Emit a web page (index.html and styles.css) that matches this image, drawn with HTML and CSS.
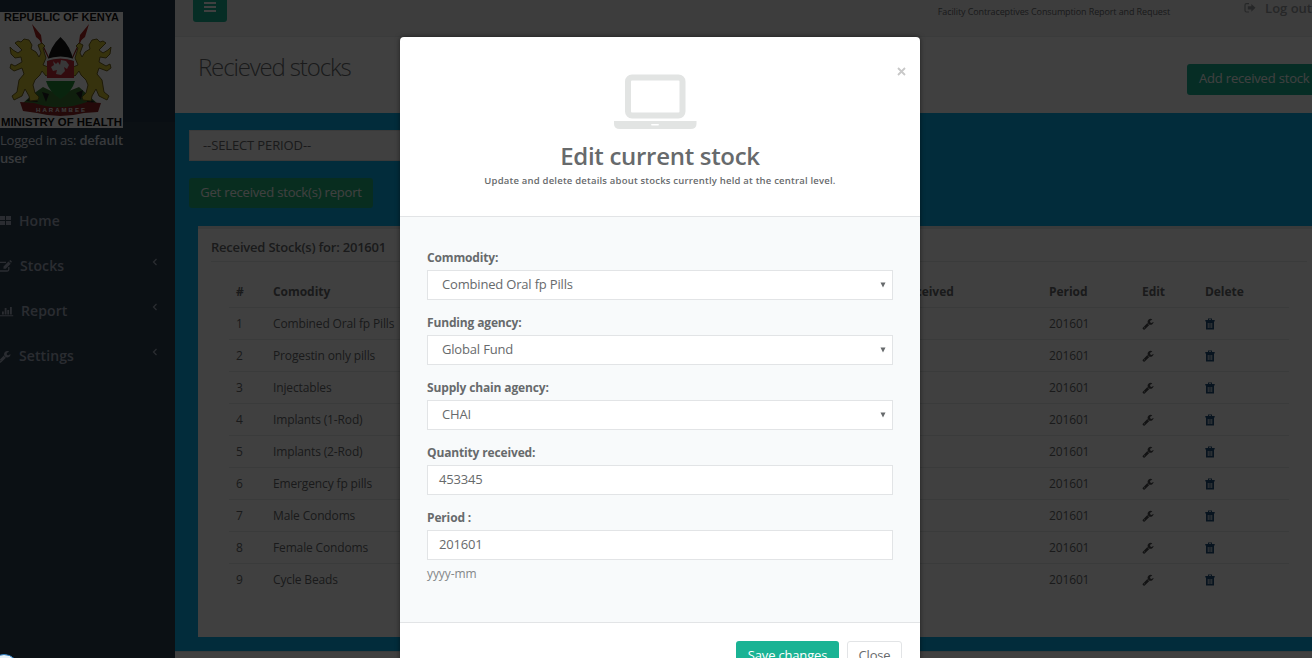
FILE: index.html
```html
<!DOCTYPE html>
<html lang="en">
<head>
<meta charset="utf-8">
<title>Received stocks</title>
<link rel="stylesheet" href="styles.css">
</head>
<body>
<svg class="defs" width="0" height="0">
  <symbol id="wrench" viewBox="0 0 1792 1792"><path d="M448 1472q0-26-19-45t-45-19-45 19-19 45 19 45 45 19 45-19 19-45zm644-420l-682 682q-37 37-90 37-52 0-91-37l-106-108q-38-36-38-90 0-53 38-91l681-681q39 98 114.500 173.500t173.500 114.500zm634-435q0 39-23 106-47 134-164.500 217.500t-258.500 83.500q-185 0-316.500-131.500t-131.500-316.500 131.500-316.500 316.500-131.500q58 0 121.500 16.500t107.500 46.500q16 11 16 28t-16 28l-293 169v224l193 107q5-3 79-48.500t135.500-81 70.500-35.500q15 0 23.500 10t8.500 25z"/></symbol>
  <symbol id="trash" viewBox="0 0 10 12"><path fill-rule="evenodd" d="M3 .5h4V2h2.700v1.400H.3V2H3zM4 1.300V2h2v-.7zM1 3.400h8v8.100H1zM2.800 5v5h.8V5zm1.800 0v5h.8V5zm1.800 0v5h.8V5z"/></symbol>
</svg>
<div class="page">
  <aside class="sidebar">
    <div class="profile">
      <svg class="emblem" viewBox="0 0 123 116">
        <rect width="123" height="116" fill="#fff"/>
        <text class="emblem-text" x="4" y="9" textLength="115" lengthAdjust="spacingAndGlyphs">REPUBLIC OF KENYA</text>
        <g stroke="#9c2420" stroke-width="1.200"><path d="M35 17L52 53M86 17L69 53"/></g>
        <path fill="#b02622" d="M32 12l4 13 6 5-1-7zM89 12l-4 13-6 5 1-7z"/>
        <path fill="#3f7d34" d="M23 91l10-9 10-7 8 4 9 5 9-5 10-4 9 8 10 9-10 5H35z"/>
        <path fill="#222" d="M26 89l8-5 4 6zM42 80l7 2-3 8zM76 81l7-3-2 10zM88 86l7 4-9 3z"/>
        <g fill="#d8c636" stroke="#665813" stroke-width=".9">
          <path id="lion" d="M21 30l3-3 5 1 3 5-1 4 5 3 3 5 2-4-3-8 4-2 3 3-2 2 3 10-3 7 5 2 2 7-4 2-4-5-2 4-5 5-2 5 2 8 4 4-1 3-8 1-1-5-4-7-3 7-8 4-2-4 5-4 2-12 5-6-2-6-8 3-4-3 1-4 4 2 7-4-1-5-6 1-4-4-1-7 3 3 5 3 4-3-4-4-3-3 3-2z"/>
          <use href="#lion" transform="matrix(-1 0 0 1 121 0)"/>
        </g>
        <path fill="#c62f3b" d="M47 49q13-6 27 0v23H47z"/>
        <path fill="#161616" d="M60.500 25q10 9 13 24-13-6-26 0 3-15 13-24z"/>
        <path fill="#fff" d="M46.500 47q14-5 28 0v2q-14-5-28 0zM46 66h29v3H46z"/>
        <path fill="#27913b" d="M46 69h29q-3 11-14.500 18Q49 80 46 69z"/>
        <path fill="#ddd" d="M53 49l3 3 2-2 2 3 1-5 5 1 3 4-2 4-3-2 1 4-4 4-5-1 1-4-4 1-2-4 3-2z"/>
        <path fill="#8f2424" d="M20 90l14 1q26 9 53-1l14 1-3 9-14 1q-24 6-47 0l-14-2z"/>
        <text class="motto" x="36" y="100" textLength="49">HARAMBEE</text>
        <text class="emblem-text" x="1" y="114" textLength="121" lengthAdjust="spacingAndGlyphs">MINISTRY OF HEALTH</text>
      </svg>
      <p class="login">Logged in as: <b>default<br>user</b></p>
    </div>
    <nav class="menu">
      <a class="item"><svg class="mi" viewBox="0 0 15 14"><path d="M0 2h5v4H0zM6 2h5v4H6zM0 7h5v4H0zM6 7h5v4H6z"/></svg><span class="home">Home</span></a>
      <a class="item"><svg class="mi" viewBox="0 0 15 14"><path fill="none" stroke="currentColor" stroke-width="1.300" d="M0 3.300h6M8.800 8v2.500q0 1.500-1.500 1.500H0"/><path d="M3.500 7.500l5-5 2.200 2.200-5 5H3.500zM9.200 2l1.100-1L12 2.700l-1 1z"/></svg><span class="stocks">Stocks</span><svg class="chev" viewBox="0 0 6 8"><path d="M4.500 1L1.500 4l3 3"/></svg></a>
      <a class="item"><svg class="mi" viewBox="0 0 15 14"><path d="M0 11.300h13.200v1H0zM2 7.500h1.800v3H2zM4.700 4h1.800v6.500H4.700zM7.300 6h1.800v4.500H7.300zM10 3h1.800v7.500H10z"/></svg><span class="report">Report</span><svg class="chev" viewBox="0 0 6 8"><path d="M4.500 1L1.500 4l3 3"/></svg></a>
      <a class="item"><svg class="mi wr"><use href="#wrench"/></svg><span class="settings">Settings</span><svg class="chev" viewBox="0 0 6 8"><path d="M4.500 1L1.500 4l3 3"/></svg></a>
    </nav>
  </aside>
  <main class="main">
    <header class="topbar">
      <button class="burger"><i></i><i></i><i></i></button>
      <span class="tagline">Facility Contraceptives Consumption Report and Request</span>
      <a class="logout"><svg viewBox="0 0 12 12" width="12" height="12"><path fill="none" stroke="currentColor" stroke-width="1.200" d="M5 1.600H2.500Q1 1.600 1 3v5.500Q1 10 2.500 10H5"/><path d="M3.800 4.300h3.500V2l4.200 3.800-4.200 3.900V7.500H3.800z"/></svg><span>Log out</span></a>
    </header>
    <section class="heading"><h2>Recieved stocks</h2><button class="add">Add received stock</button></section>
    <section class="content">
      <div class="period">--SELECT PERIOD--</div>
      <button class="get">Get received stock(s) report</button>
      <div class="panel">
        <h5><span>Received Stock(s) for: 201601</span></h5>
        <table>
          <thead><tr><th class="c1">#</th><th class="c2">Comodity</th><th class="c3">Quantity received</th><th class="c4">Period</th><th class="c5">Edit</th><th>Delete</th></tr></thead>
          <tbody>
            <tr><td>1</td><td>Combined Oral fp Pills</td><td></td><td>201601</td><td><svg class="w"><use href="#wrench"/></svg></td><td><svg class="t"><use href="#trash"/></svg></td></tr>
            <tr><td>2</td><td>Progestin only pills</td><td></td><td>201601</td><td><svg class="w"><use href="#wrench"/></svg></td><td><svg class="t"><use href="#trash"/></svg></td></tr>
            <tr><td>3</td><td>Injectables</td><td></td><td>201601</td><td><svg class="w"><use href="#wrench"/></svg></td><td><svg class="t"><use href="#trash"/></svg></td></tr>
            <tr><td>4</td><td>Implants (1-Rod)</td><td></td><td>201601</td><td><svg class="w"><use href="#wrench"/></svg></td><td><svg class="t"><use href="#trash"/></svg></td></tr>
            <tr><td>5</td><td>Implants (2-Rod)</td><td></td><td>201601</td><td><svg class="w"><use href="#wrench"/></svg></td><td><svg class="t"><use href="#trash"/></svg></td></tr>
            <tr><td>6</td><td>Emergency fp pills</td><td></td><td>201601</td><td><svg class="w"><use href="#wrench"/></svg></td><td><svg class="t"><use href="#trash"/></svg></td></tr>
            <tr><td>7</td><td>Male Condoms</td><td></td><td>201601</td><td><svg class="w"><use href="#wrench"/></svg></td><td><svg class="t"><use href="#trash"/></svg></td></tr>
            <tr><td>8</td><td>Female Condoms</td><td></td><td>201601</td><td><svg class="w"><use href="#wrench"/></svg></td><td><svg class="t"><use href="#trash"/></svg></td></tr>
            <tr><td>9</td><td>Cycle Beads</td><td></td><td>201601</td><td><svg class="w"><use href="#wrench"/></svg></td><td><svg class="t"><use href="#trash"/></svg></td></tr>
          </tbody>
        </table>
      </div>
    </section>
    <footer class="foot"></footer>
  </main>
</div>
<div class="backdrop"></div>
<div class="modal">
  <header class="mhead">
    <span class="close"><svg viewBox="0 0 9 9"><path d="M1 1l7 7M8 1L1 8"/></svg></span>
    <svg class="laptop" viewBox="0 0 83 56"><rect x="14" y="3.500" width="54.500" height="38" rx="4" fill="none" stroke="#e2e4e3" stroke-width="6"/><path fill="#e2e4e3" fill-rule="evenodd" d="M0 47h82.500v3q0 5-6 5H6q-6 0-6-5zm38 3q-1 0-1 .7t1 .7h6q1 0 1-.7t-1-.7z"/></svg>
    <h4><span>Edit current stock</span></h4>
    <small>Update and delete details about stocks currently held at the central level.</small>
  </header>
  <div class="mbody">
    <div class="field"><label>Commodity:</label><div class="input sel">Combined Oral fp Pills<svg viewBox="0 0 6 6"><path d="M.5 .5h5L3 5.500z"/></svg></div></div>
    <div class="field"><label>Funding agency:</label><div class="input sel">Global Fund<svg viewBox="0 0 6 6"><path d="M.5 .5h5L3 5.500z"/></svg></div></div>
    <div class="field"><label>Supply chain agency:</label><div class="input sel">CHAI<svg viewBox="0 0 6 6"><path d="M.5 .5h5L3 5.500z"/></svg></div></div>
    <div class="field"><label>Quantity received:</label><div class="input">453345</div></div>
    <div class="field"><label>Period :</label><div class="input">201601</div></div>
    <p class="hint">yyyy-mm</p>
  </div>
  <footer class="mfoot"><button class="save">Save changes</button><button class="cancel">Close</button></footer>
</div>
<div class="bubble"></div>
</body>
</html>
```
FILE: styles.css
```css
* { box-sizing: border-box; }
html, body { margin: 0; height: 658px; overflow: hidden; }
body { font: 13px/18px "Open Sans", "Noto Sans", sans-serif; color: #676a6c; position: relative; }
button { font: inherit; letter-spacing: -.18px; border: 0; padding: 0; display: block; white-space: nowrap; }
svg { display: block; fill: currentColor; flex: none; }
h2, h4, h5, p { margin: 0; }
.defs { position: absolute; }
.page { display: grid; grid-template-columns: 175px 1137px; height: 658px; overflow: hidden; }

.sidebar { background: #2f4050; color: #a7b1c2; overflow: hidden; }
.profile { height: 198px; padding-top: 12px; background: linear-gradient(#243b4b 122px, #2f4050 122px); }
.emblem { width: 123px; height: 116px; }
.emblem-text { font: bold 11px "Liberation Sans", sans-serif; fill: #111; }
.motto { font: bold 6px "Liberation Sans", sans-serif; fill: #eee; }
.login { font-size: 13px; padding-top: 3px; white-space: nowrap; letter-spacing: -.2px; color: #dfe4ed; }
.login b { font-weight: 600; }
.item { height: 45px; display: flex; align-items: center; font-weight: 600; font-size: 14px; letter-spacing: .1px; }
.mi { width: 15px; height: 14px; }
.mi.wr { width: 13px; height: 13px; margin: 2px 3px 0 -2px; }
.item span { flex: 1; }
.home { margin-left: 4px; }
.stocks, .settings { margin-left: 5px; }
.report { margin-left: 6px; }
.chev { width: 6px; height: 8px; margin: -7px 17px 0 0; fill: none; stroke: currentColor; stroke-width: 1.2; }

.main { display: flex; flex-direction: column; min-width: 0; }
.topbar { height: 37px; background: #f3f3f4; border-bottom: 1px solid #e7eaec; display: flex; padding-left: 18px; }
.burger { width: 34px; height: 22px; background: #1ab394; border-radius: 0 0 3px 3px; display: flex; flex-direction: column; align-items: center; gap: 2px; padding-top: 2px; }
.burger i { width: 12px; height: 2px; background: #fff; }
.tagline { margin-left: 711px; font-size: 9px; letter-spacing: -.11px; padding-top: 3px; white-space: nowrap; width: 308px; }
.logout { display: flex; gap: 9px; font-weight: 600; color: #999c9e; white-space: nowrap; height: 16px; align-items: center; }
.heading { height: 76px; background: #fff; display: flex; justify-content: space-between; padding-left: 23px; }
.heading h2 { font-weight: 300; font-size: 24px; line-height: 30px; padding-top: 15px; letter-spacing: -1.15px; }
.add { background: #1ab394; color: #fff; width: 125px; height: 31px; margin-top: 27px; border-radius: 3px 0 0 3px; text-align: left; padding: 0 0 3px 12px; }
.content { height: 538px; background: #09aeea; padding: 17px 0 0 14px; }
.period { height: 31px; width: 560px; background: #fff; border: 1px solid #e5e6e7; padding: 5px 13px; letter-spacing: -.12px; }
.get { width: 184px; height: 30px; margin-top: 17px; padding-bottom: 2px; background: #23b47c; color: #fff; border-radius: 3px; }
.panel { margin: 18px 0 0 9px; height: 411px; background: #fff; border-top: 3px solid #e7eaec; padding: 0 5px 0 13px; }
.panel h5 { height: 33px; border-bottom: 1px solid #e7eaec; font-size: 13px; font-weight: 600; line-height: 36px; letter-spacing: -.21px; }
table { width: 1060px; margin: 13px 0 0 18px; border-collapse: separate; border-spacing: 0; table-layout: fixed; font-size: 12px; letter-spacing: -.14px; text-align: left; }
th, td { height: 32px; padding: 0 0 0 7px; border-top: 1px solid #e7eaec; white-space: nowrap; }
th { border-top: 0; letter-spacing: -.05px; padding-top: 2px; }
.c1 { width: 37px; } .c2 { width: 574px; } .c3 { width: 202px; } .c4 { width: 93px; } .c5 { width: 63px; }
.w { width: 12px; height: 12px; color: #4c4e50; }
.t { width: 10px; height: 12px; color: #23527c; }
.foot { height: 7px; background: #fff; border-top: 1px solid #e7eaec; }

.backdrop { position: absolute; inset: 0; background: rgba(0,0,0,.75); }
.modal { position: absolute; left: 400px; top: 37px; width: 520px; height: 650px; background: #fff; border-radius: 4px 4px 0 0; box-shadow: 0 0 5px rgba(0,0,0,.5); }
.mhead { height: 180px; border-bottom: 1px solid #e2e4e6; padding-top: 37px; display: flex; flex-direction: column; align-items: center; position: relative; }
.close { position: absolute; right: 14px; top: 30px; }
.close svg { width: 9px; height: 9px; stroke: #c8c8c8; stroke-width: 1.8; }
.laptop { width: 83px; height: 56px; margin-left: -9px; }
.mhead h4 { font-size: 24px; font-weight: 600; line-height: 30px; margin-top: 11px; white-space: nowrap; letter-spacing: -.3px; }
.mhead small { font-size: 9.5px; font-weight: 600; line-height: 14px; margin-top: 3px; white-space: nowrap; letter-spacing: .2px; }
.mbody { background: #f8fafb; height: 405px; padding: 31px 27px 0; }
.field { height: 65px; }
.field label { display: block; font-weight: 700; font-size: 12px; height: 22px; line-height: 20px; letter-spacing: -.15px; }
.input { height: 30px; background: #fff; border: 1px solid #e2e4e6; display: flex; justify-content: space-between; align-items: center; padding: 0 6px 2px 11px; letter-spacing: -.18px; }
.sel { padding-left: 14px; }
.sel svg { width: 6px; height: 6px; margin-top: 2px; }
.hint { font-size: 12px; color: #848789; margin-top: -8px; letter-spacing: -.1px; }
.mfoot { border-top: 1px solid #e2e4e6; display: flex; justify-content: flex-end; gap: 8px; padding: 18px 18px 0 0; }
.mfoot button { height: 31px; padding-bottom: 3px; border-radius: 3px; }
.save { width: 103px; background: #1ab394; color: #fff; }
.cancel { width: 55px; background: #fff; border: 1px solid #e2e4e6; color: #676a6c; }
.mfoot .cancel { border: 1px solid #e2e4e6; }
.bubble { position: absolute; left: -11px; top: 654px; width: 30px; height: 30px; border-radius: 50%; background: #e7f0f6; border: 1px solid #2a7bc0; }
```
